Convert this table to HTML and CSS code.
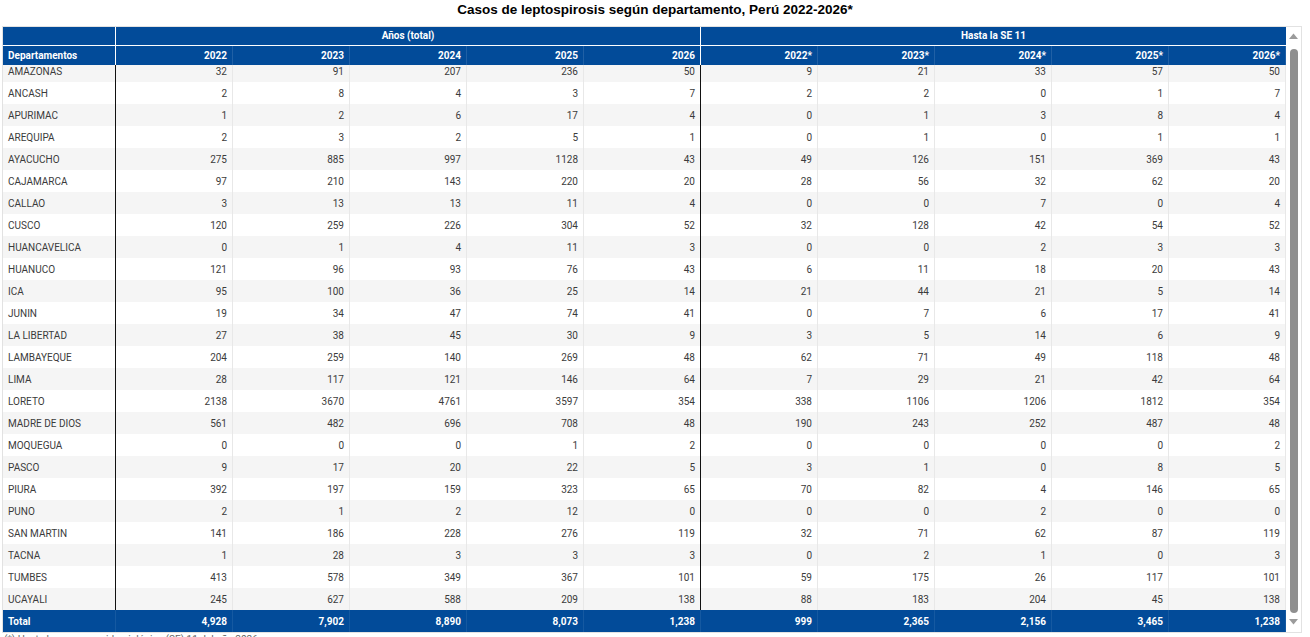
FILE: index.html
```html
<!DOCTYPE html>
<html lang="es">
<head>
<meta charset="utf-8">
<title>Casos de leptospirosis</title>
<link rel="stylesheet" href="styles.css">
</head>
<body>
<h1 class="title">Casos de leptospirosis según departamento, Perú 2022-2026*</h1>
<div class="frame">
  <div class="tablearea">
    <div class="thead">
      <div class="hrow hrow1">
        <div class="h dept"></div>
        <div class="h grp grp1">Años (total)</div>
        <div class="h grp grp2">Hasta la SE 11</div>
      </div>
      <div class="hrow hrow2">
        <div class="h dept left">Departamentos</div>
        <div class="h">2022</div><div class="h">2023</div><div class="h">2024</div><div class="h">2025</div><div class="h sep">2026</div>
        <div class="h">2022*</div><div class="h">2023*</div><div class="h">2024*</div><div class="h">2025*</div><div class="h">2026*</div>
      </div>
    </div>
    <div class="viewport">
      <div class="tbody">
        <div class="row"><div class="c dept">AMAZONAS</div><div class="c">32</div><div class="c">91</div><div class="c">207</div><div class="c">236</div><div class="c sep">50</div><div class="c">9</div><div class="c">21</div><div class="c">33</div><div class="c">57</div><div class="c">50</div></div>
        <div class="row"><div class="c dept">ANCASH</div><div class="c">2</div><div class="c">8</div><div class="c">4</div><div class="c">3</div><div class="c sep">7</div><div class="c">2</div><div class="c">2</div><div class="c">0</div><div class="c">1</div><div class="c">7</div></div>
        <div class="row"><div class="c dept">APURIMAC</div><div class="c">1</div><div class="c">2</div><div class="c">6</div><div class="c">17</div><div class="c sep">4</div><div class="c">0</div><div class="c">1</div><div class="c">3</div><div class="c">8</div><div class="c">4</div></div>
        <div class="row"><div class="c dept">AREQUIPA</div><div class="c">2</div><div class="c">3</div><div class="c">2</div><div class="c">5</div><div class="c sep">1</div><div class="c">0</div><div class="c">1</div><div class="c">0</div><div class="c">1</div><div class="c">1</div></div>
        <div class="row"><div class="c dept">AYACUCHO</div><div class="c">275</div><div class="c">885</div><div class="c">997</div><div class="c">1128</div><div class="c sep">43</div><div class="c">49</div><div class="c">126</div><div class="c">151</div><div class="c">369</div><div class="c">43</div></div>
        <div class="row"><div class="c dept">CAJAMARCA</div><div class="c">97</div><div class="c">210</div><div class="c">143</div><div class="c">220</div><div class="c sep">20</div><div class="c">28</div><div class="c">56</div><div class="c">32</div><div class="c">62</div><div class="c">20</div></div>
        <div class="row"><div class="c dept">CALLAO</div><div class="c">3</div><div class="c">13</div><div class="c">13</div><div class="c">11</div><div class="c sep">4</div><div class="c">0</div><div class="c">0</div><div class="c">7</div><div class="c">0</div><div class="c">4</div></div>
        <div class="row"><div class="c dept">CUSCO</div><div class="c">120</div><div class="c">259</div><div class="c">226</div><div class="c">304</div><div class="c sep">52</div><div class="c">32</div><div class="c">128</div><div class="c">42</div><div class="c">54</div><div class="c">52</div></div>
        <div class="row"><div class="c dept">HUANCAVELICA</div><div class="c">0</div><div class="c">1</div><div class="c">4</div><div class="c">11</div><div class="c sep">3</div><div class="c">0</div><div class="c">0</div><div class="c">2</div><div class="c">3</div><div class="c">3</div></div>
        <div class="row"><div class="c dept">HUANUCO</div><div class="c">121</div><div class="c">96</div><div class="c">93</div><div class="c">76</div><div class="c sep">43</div><div class="c">6</div><div class="c">11</div><div class="c">18</div><div class="c">20</div><div class="c">43</div></div>
        <div class="row"><div class="c dept">ICA</div><div class="c">95</div><div class="c">100</div><div class="c">36</div><div class="c">25</div><div class="c sep">14</div><div class="c">21</div><div class="c">44</div><div class="c">21</div><div class="c">5</div><div class="c">14</div></div>
        <div class="row"><div class="c dept">JUNIN</div><div class="c">19</div><div class="c">34</div><div class="c">47</div><div class="c">74</div><div class="c sep">41</div><div class="c">0</div><div class="c">7</div><div class="c">6</div><div class="c">17</div><div class="c">41</div></div>
        <div class="row"><div class="c dept">LA LIBERTAD</div><div class="c">27</div><div class="c">38</div><div class="c">45</div><div class="c">30</div><div class="c sep">9</div><div class="c">3</div><div class="c">5</div><div class="c">14</div><div class="c">6</div><div class="c">9</div></div>
        <div class="row"><div class="c dept">LAMBAYEQUE</div><div class="c">204</div><div class="c">259</div><div class="c">140</div><div class="c">269</div><div class="c sep">48</div><div class="c">62</div><div class="c">71</div><div class="c">49</div><div class="c">118</div><div class="c">48</div></div>
        <div class="row"><div class="c dept">LIMA</div><div class="c">28</div><div class="c">117</div><div class="c">121</div><div class="c">146</div><div class="c sep">64</div><div class="c">7</div><div class="c">29</div><div class="c">21</div><div class="c">42</div><div class="c">64</div></div>
        <div class="row"><div class="c dept">LORETO</div><div class="c">2138</div><div class="c">3670</div><div class="c">4761</div><div class="c">3597</div><div class="c sep">354</div><div class="c">338</div><div class="c">1106</div><div class="c">1206</div><div class="c">1812</div><div class="c">354</div></div>
        <div class="row"><div class="c dept">MADRE DE DIOS</div><div class="c">561</div><div class="c">482</div><div class="c">696</div><div class="c">708</div><div class="c sep">48</div><div class="c">190</div><div class="c">243</div><div class="c">252</div><div class="c">487</div><div class="c">48</div></div>
        <div class="row"><div class="c dept">MOQUEGUA</div><div class="c">0</div><div class="c">0</div><div class="c">0</div><div class="c">1</div><div class="c sep">2</div><div class="c">0</div><div class="c">0</div><div class="c">0</div><div class="c">0</div><div class="c">2</div></div>
        <div class="row"><div class="c dept">PASCO</div><div class="c">9</div><div class="c">17</div><div class="c">20</div><div class="c">22</div><div class="c sep">5</div><div class="c">3</div><div class="c">1</div><div class="c">0</div><div class="c">8</div><div class="c">5</div></div>
        <div class="row"><div class="c dept">PIURA</div><div class="c">392</div><div class="c">197</div><div class="c">159</div><div class="c">323</div><div class="c sep">65</div><div class="c">70</div><div class="c">82</div><div class="c">4</div><div class="c">146</div><div class="c">65</div></div>
        <div class="row"><div class="c dept">PUNO</div><div class="c">2</div><div class="c">1</div><div class="c">2</div><div class="c">12</div><div class="c sep">0</div><div class="c">0</div><div class="c">0</div><div class="c">2</div><div class="c">0</div><div class="c">0</div></div>
        <div class="row"><div class="c dept">SAN MARTIN</div><div class="c">141</div><div class="c">186</div><div class="c">228</div><div class="c">276</div><div class="c sep">119</div><div class="c">32</div><div class="c">71</div><div class="c">62</div><div class="c">87</div><div class="c">119</div></div>
        <div class="row"><div class="c dept">TACNA</div><div class="c">1</div><div class="c">28</div><div class="c">3</div><div class="c">3</div><div class="c sep">3</div><div class="c">0</div><div class="c">2</div><div class="c">1</div><div class="c">0</div><div class="c">3</div></div>
        <div class="row"><div class="c dept">TUMBES</div><div class="c">413</div><div class="c">578</div><div class="c">349</div><div class="c">367</div><div class="c sep">101</div><div class="c">59</div><div class="c">175</div><div class="c">26</div><div class="c">117</div><div class="c">101</div></div>
        <div class="row"><div class="c dept">UCAYALI</div><div class="c">245</div><div class="c">627</div><div class="c">588</div><div class="c">209</div><div class="c sep">138</div><div class="c">88</div><div class="c">183</div><div class="c">204</div><div class="c">45</div><div class="c">138</div></div>
      </div>
    </div>
    <div class="tfoot">
      <div class="t dept">Total</div>
      <div class="t">4,928</div><div class="t">7,902</div><div class="t">8,890</div><div class="t">8,073</div><div class="t">1,238</div>
      <div class="t">999</div><div class="t">2,365</div><div class="t">2,156</div><div class="t">3,465</div><div class="t">1,238</div>
    </div>
  </div>
  <div class="scrollbar">
    <div class="sb-btn"><svg width="9" height="6" viewBox="0 0 9 6"><path d="M0 6 L4.5 0.5 L9 6 Z" fill="#9b9b9b"/></svg></div>
    <div class="sb-thumb"></div>
    <div class="sb-btn"><svg width="9" height="6" viewBox="0 0 9 6"><path d="M0 0 L4.5 5.5 L9 0 Z" fill="#9b9b9b"/></svg></div>
  </div>
</div>
<p class="note">(*) Hasta la semana epidemiológica (SE) 11 del año 2026</p>
</body>
</html>
```

FILE: styles.css
```css
html, body {
  margin: 0;
  padding: 0;
  background: #ffffff;
}
body {
  font-family: Roboto, "Liberation Sans", sans-serif;
  width: 1310px;
  height: 637px;
  overflow: hidden;
}
.title {
  margin: 0;
  height: 26px;
  font-family: "Liberation Sans", Arial, sans-serif;
  font-size: 13.5px;
  font-weight: bold;
  line-height: 19px;
  text-align: center;
  color: #000;
}
.frame {
  margin-left: 2px;
  width: 1298px;
  border: 1px solid #e2e2e2;
  display: flex;
}
.tablearea {
  width: 1283px;
  display: flex;
  flex-direction: column;
}
.hrow, .row, .tfoot {
  display: grid;
  grid-template-columns: 113px repeat(10, 117px);
}
.thead {
  background: #024b99;
  color: #fff;
  font-weight: bold;
  font-size: 10px;
}
.hrow1 {
  height: 19px;
  grid-template-columns: 113px 585px 585px;
  border-bottom: 1px solid #ffffff;
  box-sizing: border-box;
}
.hrow2 {
  height: 19px;
}
.h {
  box-sizing: border-box;
  border-right: 1px solid rgba(255,255,255,0.12);
  padding: 0 5px;
  text-align: right;
  line-height: 19px;
  white-space: nowrap;
}
.hrow1 .h { line-height: 18px; }
.h.dept, .h.sep, .grp1 { border-right: 1px solid #ffffff; }
.grp { text-align: center; }
.grp2 { border-right: none; }
.h.left { text-align: left; }
.viewport {
  height: 545px;
  overflow: hidden;
}
.tbody {
  margin-top: -5px;
}
.row {
  height: 22px;
  font-size: 10px;
  color: #3b3b3b;
}
.row:nth-child(odd) { background: #f5f5f5; }
.c {
  box-sizing: border-box;
  border-right: 1px solid #e8e8e8;
  padding: 1px 5px 0 5px;
  text-align: right;
  line-height: 21px;
  white-space: nowrap;
}
.c.dept {
  text-align: left;
  border-right: 1px solid #111;
}
.c.sep { border-right: 1px solid #111; }
.tfoot {
  height: 22px;
  background: #024b99;
  color: #fff;
  font-weight: bold;
  font-size: 10px;
}
.t {
  box-sizing: border-box;
  border-right: 1px solid rgba(255,255,255,0.08);
  padding: 1px 5px 0 5px;
  text-align: right;
  line-height: 21px;
}
.t.dept { text-align: left; }
.scrollbar {
  width: 15px;
  display: flex;
  flex-direction: column;
  align-items: center;
  background: #ffffff;
}
.sb-btn {
  height: 18px;
  width: 15px;
  display: flex;
  align-items: center;
  justify-content: center;
}
.sb-thumb {
  margin-top: 4px;
  width: 8px;
  height: 564px;
  border-radius: 4px;
  background: #8f8f8f;
}
.note {
  margin: 1px 0 0 4px;
  font-size: 10px;
  color: #666;
  line-height: 12px;
}
```
